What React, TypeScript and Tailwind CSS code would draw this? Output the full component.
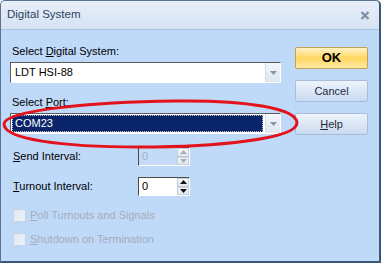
import React from "react";

const font = { fontFamily: '"Liberation Sans", Arial, sans-serif' };

function ComboArrow() {
  return (
    <div className="w-[15px] h-full flex items-center justify-center bg-gradient-to-b from-[#f4f7fb] to-[#dfe6ef] border-l border-[#d4dbe6]">
      <svg width="7" height="4" viewBox="0 0 7 4"><path d="M0 0h7L3.5 4z" fill="#8a94a4" /></svg>
    </div>
  );
}

function Spin({ disabled }: { disabled?: boolean }) {
  const c = disabled ? "#a7b0bd" : "#111";
  return (
    <div className={`w-[52px] h-[19px] flex border-t border-l border-[#4b4b4b] border-b border-r border-b-white border-r-white ${disabled ? "bg-[#c4dbf8]" : "bg-white"}`}>
      <div className={`flex-1 pl-[3px] text-[11px] leading-[17px] ${disabled ? "text-[#a5b0bf]" : "text-black"}`}>0</div>
      <div className="w-[12px] flex flex-col">
        <div className="flex-1 flex items-center justify-center bg-gradient-to-b from-[#f6f8fb] to-[#e2e8f0] border border-[#c5cdd8]">
          <svg width="7" height="4" viewBox="0 0 7 4"><path d="M0 4h7L3.5 0z" fill={c} /></svg>
        </div>
        <div className="flex-1 flex items-center justify-center bg-gradient-to-b from-[#f6f8fb] to-[#e2e8f0] border border-[#c5cdd8]">
          <svg width="7" height="4" viewBox="0 0 7 4"><path d="M0 0h7L3.5 4z" fill={c} /></svg>
        </div>
      </div>
    </div>
  );
}

function Btn({ children, ok }: { children: React.ReactNode; ok?: boolean }) {
  return (
    <div
      className={`w-[73px] h-[22px] flex items-center justify-center rounded-[2px] border ${
        ok
          ? "border-[#c2a25a] bg-gradient-to-b from-[#fff3c4] via-[#ffd65e] to-[#ffe9a0] font-bold text-[13px] text-black"
          : "border-[#a9bdd6] bg-gradient-to-b from-[#eef4fb] via-[#dce7f5] to-[#c9daf0] text-[11px] text-[#1b2a3e]"
      }`}
    >
      {children}
    </div>
  );
}

function Check({ children }: { children: React.ReactNode }) {
  return (
    <div className="flex items-center h-[13px]">
      <div className="w-[13px] h-[13px] border border-[#c8d3e2] bg-gradient-to-br from-[#dfe8f4] to-[#eef3f9]" />
      <div className="ml-[4px] text-[11px] text-[#a3adbb]">{children}</div>
    </div>
  );
}

export default function App() {
  return (
    <div className="w-[381px] h-[263px] relative overflow-hidden bg-white" style={font}>
      <div className="w-[381px] h-[263px] flex flex-col border border-[#5a7394] rounded-t-[5px] bg-[#bfd9f9] border-b-2 border-r-2 border-b-[#3c5678] border-r-[#3c5678]">
        <div className="h-[29px] flex items-center justify-between pl-[6px] pr-[9px] bg-gradient-to-b from-[#e7eff9] to-[#d6e3f3] border-b border-[#aec5e2] rounded-t-[4px]">
          <div className="text-[11.5px] text-[#2d3f5c]">Digital System</div>
          <svg width="10" height="9" viewBox="0 0 10 9">
            <path d="M1.5 1L8.5 8M8.5 1L1.5 8" stroke="#7d8ea8" strokeWidth="2.2" />
          </svg>
        </div>
        <div className="flex flex-1 pl-[9px]">
          <div className="w-[271px] pt-[14px]">
            <div className="text-[11px] leading-[14px] text-black pl-[2px]">
              Select <span className="underline">D</span>igital System:
            </div>
            <div className="mt-[4px] h-[21px] flex border-t border-l border-[#5b5b5b] border-b border-r border-b-white border-r-white bg-white">
              <div className="flex-1 pl-[4px] text-[11px] leading-[19px] text-black">LDT HSI-88</div>
              <ComboArrow />
            </div>
            <div className="mt-[12px] text-[11px] leading-[14px] text-black pl-[2px]">
              Select <span className="underline">P</span>ort:
            </div>
            <div className="mt-[4px] h-[21px] flex border-t border-l border-[#5b5b5b] border-b border-r border-b-white border-r-white bg-white">
              <div className="flex-1 p-[1px] pr-[2px]">
                <div className="h-full bg-[#0a246a] outline-1 outline-dotted outline-[#c0c0c0] -outline-offset-1 pl-[3px] text-[11px] leading-[17px] text-white">
                  COM23
                </div>
              </div>
              <ComboArrow />
            </div>
            <div className="mt-[13px] flex items-center">
              <div className="w-[128px] pl-[3px] text-[11px] text-black">
                <span className="underline">S</span>end Interval:
              </div>
              <Spin disabled />
            </div>
            <div className="mt-[11px] flex items-center">
              <div className="w-[128px] pl-[3px] text-[11px] text-black">
                <span className="underline">T</span>urnout Interval:
              </div>
              <Spin />
            </div>
            <div className="mt-[13px] pl-[3px] flex flex-col gap-[11px]">
              <Check>
                <span className="underline">P</span>oll Turnouts and Signals
              </Check>
              <Check>
                <span className="underline">S</span>hutdown on Termination
              </Check>
            </div>
          </div>
          <div className="ml-[14px] pt-[17px] flex flex-col gap-[11px]">
            <Btn ok>OK</Btn>
            <Btn>Cancel</Btn>
            <Btn>
              <span className="underline">H</span>elp
            </Btn>
          </div>
        </div>
      </div>
      <svg className="absolute left-0 top-0 pointer-events-none" width="381" height="263" viewBox="0 0 381 263">
        <path
          d="M297 123 C297 108 245 100 175 101 C95 102 4 110 4 124 C4 139 60 147 140 147 C215 147 297 139 297 123"
          fill="none"
          stroke="#e3121b"
          strokeWidth="3"
        />
      </svg>
    </div>
  );
}
